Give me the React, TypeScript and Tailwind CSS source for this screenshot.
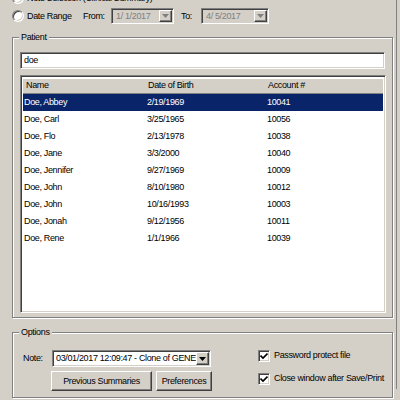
import React from "react";

const sunken =
  "border border-t-[#808080] border-l-[#808080] border-r-white border-b-white shadow-[inset_1px_1px_0_#404040,inset_-1px_-1px_0_#d4d0c8]";
const raised =
  "border border-t-white border-l-white border-r-[#404040] border-b-[#404040] shadow-[inset_-1px_-1px_0_#808080,inset_1px_1px_0_#d4d0c8]";
const group =
  "relative border border-[#808080] shadow-[1px_1px_0_#fff,inset_1px_1px_0_#fff]";

function Radio() {
  return (
    <div className="w-[12px] h-[12px] rounded-full bg-white border border-t-[#808080] border-l-[#808080] border-r-white border-b-white shadow-[inset_1px_1px_0_#404040,inset_-1px_-1px_0_#d4d0c8] shrink-0" />
  );
}

function Arrow({ color }: { color: string }) {
  return (
    <svg width="7" height="4" viewBox="0 0 7 4">
      <polygon points="0,0 7,0 3.5,4" fill={color} />
    </svg>
  );
}

function DateBox({ value, width }: { value: string; width: string }) {
  return (
    <div className={`${sunken} ${width} h-[16px] bg-[#d4d0c8] flex items-center pl-[4px] pr-[1px]`}>
      <span className="flex-1 text-[#808080] whitespace-pre">{value}</span>
      <div className={`${raised} w-[13px] h-[12px] flex items-center justify-center bg-[#d4d0c8]`}>
        <Arrow color="#808080" />
      </div>
    </div>
  );
}

function Check({ label }: { label: string }) {
  return (
    <div className="flex items-center h-[23px]">
      <div className={`${sunken} w-[12px] h-[12px] bg-white flex items-center justify-center shrink-0`}>
        <svg width="8" height="8" viewBox="0 0 8 8">
          <polyline points="0.5,3.5 3,6 7.5,1.5" fill="none" stroke="#000" strokeWidth="1.6" />
        </svg>
      </div>
      <span className="ml-[4px]">{label}</span>
    </div>
  );
}

const patients = [
  ["Doe, Abbey", "2/19/1969", "10041"],
  ["Doe, Carl", "3/25/1965", "10056"],
  ["Doe, Flo", "2/13/1978", "10038"],
  ["Doe, Jane", "3/3/2000", "10040"],
  ["Doe, Jennifer", "9/27/1969", "10009"],
  ["Doe, John", "8/10/1980", "10012"],
  ["Doe, John", "10/16/1993", "10003"],
  ["Doe, Jonah", "9/12/1956", "10011"],
  ["Doe, Rene", "1/1/1966", "10039"],
];

export default function App() {
  return (
    <div className="w-[400px] h-[400px] bg-[#d4d0c8] overflow-hidden font-['Liberation_Sans',Arial,sans-serif] text-[9px] tracking-[-0.35px] text-black leading-none">
      <div className="w-[397px] h-[400px] border-r border-[#808080]">
        {/* Top radios */}
        <div className="pl-[12px] -mt-[11px]">
          <div className="h-[18px] flex items-center">
            <Radio />
            <span className="ml-[3px]">Note Selection (Clinical Summary)</span>
          </div>
          <div className="h-[18px] flex items-center">
            <Radio />
            <span className="ml-[3px] w-[56px]">Date Range</span>
            <span className="w-[28px] text-[#000]">From:</span>
            <DateBox value="1/ 1/2017" width="w-[63px]" />
            <span className="ml-[7px] w-[20px]">To:</span>
            <DateBox value="4/ 5/2017" width="w-[68px]" />
          </div>
        </div>

        {/* Patient group */}
        <div className={`${group} ml-[12px] mt-[12px] w-[381px] h-[281px] pl-[7px] pt-[14px]`}>
          <span className="absolute -top-[5px] left-[6px] bg-[#d4d0c8] px-[2px]">Patient</span>
          <div className={`${sunken} w-[365px] h-[17px] bg-white flex items-center pl-[3px]`}>doe</div>
          <div className={`${sunken} mt-[6px] w-[366px] h-[238px] bg-white flex flex-col p-[2px]`}>
            <div className="h-[16px] bg-[#d4d0c8] border-b border-[#808080] shadow-[inset_0_1px_0_#fff] grid grid-cols-[121px_121px_1fr] items-center pl-[3px]">
              <span>Name</span>
              <span className="pl-[1px]">Date of Birth</span>
              <span>Account #</span>
            </div>
            {patients.map((p, i) => (
              <div
                key={i}
                className={`h-[17px] grid grid-cols-[122px_121px_1fr] items-center pl-[1px] ${
                  i === 0 ? "bg-[#0a246a] text-white" : ""
                }`}
              >
                <span>{p[0]}</span>
                <span className="pl-[1px]">{p[1]}</span>
                <span>{p[2]}</span>
              </div>
            ))}
          </div>
        </div>

        {/* Options group */}
        <div className={`${group} ml-[12px] mt-[14px] w-[381px] h-[66px] pt-[17px] flex`}>
          <span className="absolute -top-[5px] left-[6px] bg-[#d4d0c8] px-[2px]">Options</span>
          <div className="flex flex-col pl-[10px]">
            <div className="flex items-center h-[17px]">
              <span className="w-[29px]">Note:</span>
              <div className={`${sunken} w-[159px] h-[17px] bg-white flex items-center pl-[3px] pr-[1px]`}>
                <span className="flex-1 overflow-hidden whitespace-nowrap">03/01/2017 12:09:47 - Clone of GENERAL</span>
                <div className={`${raised} w-[13px] h-[13px] flex items-center justify-center bg-[#d4d0c8] shrink-0`}>
                  <Arrow color="#000" />
                </div>
              </div>
            </div>
            <div className="flex mt-[4px] ml-[28px]">
              <div className={`${raised} w-[101px] h-[20px] bg-[#d4d0c8] flex items-center justify-center`}>Previous Summaries</div>
              <div className={`${raised} ml-[4px] w-[56px] h-[20px] bg-[#d4d0c8] flex items-center justify-center`}>Preferences</div>
            </div>
          </div>
          <div className="flex flex-col ml-[46px] -mt-[6px]">
            <Check label="Password protect file" />
            <Check label="Close window after Save/Print" />
          </div>
        </div>
      </div>
    </div>
  );
}
